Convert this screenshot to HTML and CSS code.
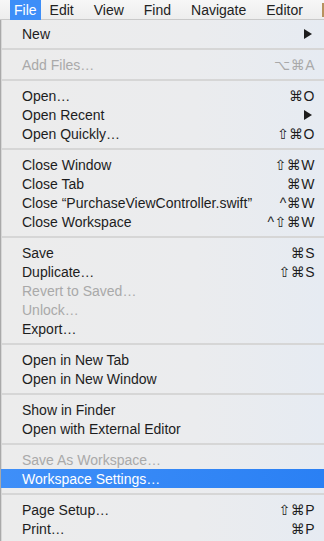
FILE: index.html
```html
<!DOCTYPE html>
<html>
<head>
<meta charset="utf-8">
<link rel="stylesheet" href="styles.css">
</head>
<body>
<div class="menubar">
  <span class="mb-item active">File</span>
  <span class="mb-item">Edit</span>
  <span class="mb-item">View</span>
  <span class="mb-item">Find</span>
  <span class="mb-item">Navigate</span>
  <span class="mb-item">Editor</span>
  <span class="mb-edge"></span>
</div>
<div class="menu">
  <div class="row"><span class="label">New</span><span class="arrow"></span></div>
  <div class="sep"></div>
  <div class="row disabled"><span class="label">Add Files…</span><span class="key">⌥⌘A</span></div>
  <div class="sep"></div>
  <div class="row"><span class="label">Open…</span><span class="key">⌘O</span></div>
  <div class="row"><span class="label">Open Recent</span><span class="arrow"></span></div>
  <div class="row"><span class="label">Open Quickly…</span><span class="key">⇧⌘O</span></div>
  <div class="sep"></div>
  <div class="row"><span class="label">Close Window</span><span class="key">⇧⌘W</span></div>
  <div class="row"><span class="label">Close Tab</span><span class="key">⌘W</span></div>
  <div class="row"><span class="label">Close “PurchaseViewController.swift”</span><span class="key">^⌘W</span></div>
  <div class="row"><span class="label">Close Workspace</span><span class="key">^⇧⌘W</span></div>
  <div class="sep"></div>
  <div class="row"><span class="label">Save</span><span class="key">⌘S</span></div>
  <div class="row"><span class="label">Duplicate…</span><span class="key">⇧⌘S</span></div>
  <div class="row disabled"><span class="label">Revert to Saved…</span></div>
  <div class="row disabled"><span class="label">Unlock…</span></div>
  <div class="row"><span class="label">Export…</span></div>
  <div class="sep"></div>
  <div class="row"><span class="label">Open in New Tab</span></div>
  <div class="row"><span class="label">Open in New Window</span></div>
  <div class="sep"></div>
  <div class="row"><span class="label">Show in Finder</span></div>
  <div class="row"><span class="label">Open with External Editor</span></div>
  <div class="sep"></div>
  <div class="row disabled"><span class="label">Save As Workspace…</span></div>
  <div class="row selected"><span class="label">Workspace Settings…</span></div>
  <div class="sep"></div>
  <div class="row"><span class="label">Page Setup…</span><span class="key">⇧⌘P</span></div>
  <div class="row"><span class="label">Print…</span><span class="key">⌘P</span></div>
</div>
</body>
</html>
```

FILE: styles.css
```css
html, body {
  margin: 0;
  padding: 0;
  background: #e6e8ec;
  overflow: hidden;
}
body {
  width: 324px;
  height: 541px;
  font-family: "Liberation Sans", Arial, sans-serif;
  font-size: 14px;
  color: #1d1d1d;
}
.menubar {
  height: 20px;
  display: flex;
  align-items: center;
  background: linear-gradient(#f7f7f7, #ededed);
  border-bottom: 1px solid #c9c9c9;
  padding-left: 10px;
  box-sizing: border-box;
  position: relative;
}
.mb-item {
  height: 20px;
  line-height: 20px;
  padding: 0 3px;
  margin-right: 14px;
  white-space: nowrap;
  color: #222;
}
.mb-item.active {
  background: #3d8ef8;
  color: #fff;
  padding: 0 4px;
  margin-right: 6px;
}
.mb-edge {
  position: absolute;
  right: 0;
  top: 3px;
  width: 2px;
  height: 14px;
  background: #b7925f;
}
.menu {
  height: 521px;
  box-sizing: border-box;
  padding-top: 4px;
  border-left: 1px solid #a9a9a9;
  box-shadow: inset 1px 0 0 #d7d7d7;
  background: linear-gradient(to right, #ececec 0%, #ebecee 60%, #e6ebf2 100%);
}
.row {
  height: 19px;
  display: flex;
  align-items: center;
  justify-content: space-between;
  padding: 0 9px 0 21px;
  white-space: nowrap;
}
.row.disabled { color: #a9a9a9; }
.row.selected {
  background: linear-gradient(to right, #3f8ff8, #2a80f4);
  color: #fff;
}
.key {
  font-family: "Liberation Sans", "DejaVu Sans", sans-serif;
  letter-spacing: 0.5px;
}
.arrow {
  width: 0;
  height: 0;
  border-left: 8px solid #1d1d1d;
  border-top: 5px solid transparent;
  border-bottom: 5px solid transparent;
  margin-right: 3px;
}
.sep {
  height: 12px;
  display: flex;
  align-items: center;
}
.sep::before {
  content: "";
  display: block;
  width: 100%;
  height: 2px;
  background: #d6d6d6;
}
```
